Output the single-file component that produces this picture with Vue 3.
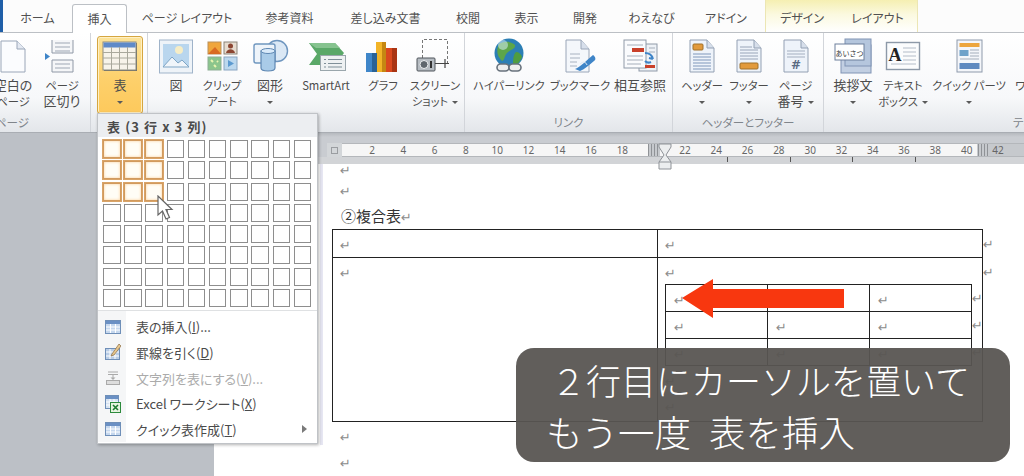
<script setup>
const tabs = [
  { t: 'ホーム', w: 69 },
  { t: '挿入', w: 55, active: true },
  { t: 'ページ レイアウト', w: 120 },
  { t: '参考資料', w: 85 },
  { t: '差し込み文書', w: 107 },
  { t: '校閲', w: 58 },
  { t: '表示', w: 59 },
  { t: '開発', w: 58 },
  { t: 'わえなび', w: 75 },
  { t: 'アドイン', w: 74 }
]
const ctxTabs = [
  { t: 'デザイン', w: 72 },
  { t: 'レイアウト', w: 79 }
]
const groups = [
  { label: 'ページ', w: 157, pad: 53, buttons: [
    { w: 52, icon: 'blank', l: ['空白の', 'ページ'] },
    { w: 46, icon: 'break', l: ['ページ', '区切り'] }
  ] },
  { label: '', w: 57, pad: 6, buttons: [
    { w: 46, icon: 'table', l: ['表'], caret: 'below', on: true }
  ] },
  { label: '', w: 317, pad: 0, buttons: [
    { w: 56, icon: 'picture', l: ['図'] },
    { w: 36, icon: 'clip', l: ['クリップ', 'アート'] },
    { w: 60, icon: 'shapes', l: ['図形'], caret: 'below' },
    { w: 52, icon: 'smart', l: ['SmartArt'] },
    { w: 62, icon: 'chart', l: ['グラフ'] },
    { w: 42, icon: 'shot', l: ['スクリーン', 'ショット'], caret: 'inline' }
  ] },
  { label: 'リンク', w: 208, pad: 0, buttons: [
    { w: 88, icon: 'globe', l: ['ハイパーリンク'] },
    { w: 54, icon: 'bookmark', l: ['ブックマーク'] },
    { w: 66, icon: 'xref', l: ['相互参照'] }
  ] },
  { label: 'ヘッダーとフッター', w: 151, pad: 0, buttons: [
    { w: 58, icon: 'header', l: ['ヘッダー'], caret: 'below' },
    { w: 36, icon: 'footer', l: ['フッター'], caret: 'below' },
    { w: 57, icon: 'pagenum', l: ['ページ', '番号'], caret: 'inline' }
  ] },
  { label: 'テキスト', w: 418, pad: 0, last: true, buttons: [
    { w: 58, icon: 'greet', l: ['挨拶文'], caret: 'below' },
    { w: 42, icon: 'textbox', l: ['テキスト', 'ボックス'], caret: 'inline' },
    { w: 90, icon: 'quick', l: ['クイック パーツ'], caret: 'below' },
    { w: 62, icon: 'none', l: ['ワードアート'] }
  ] }
]
const isKana = (s) => !/[\u4e00-\u9fff]/.test(s)
const rulerNums = []
for (let n = 2; n <= 42; n += 2) rulerNums.push(n)
const ticks = [1, 2, 3, 4]
const rows = [0, 1, 2, 3, 4, 5, 6, 7]
const cols = [0, 1, 2, 3, 4, 5, 6, 7, 8, 9]
</script>

<template>
  <div class="screen">
    <div class="tabbar">
      <div class="file"></div>
      <div
        v-for="tab in tabs"
        :key="tab.t"
        class="tab"
        :class="{ active: tab.active }"
        :style="{ width: tab.w + 'px' }"
      >{{ tab.t }}</div>
      <div class="ctx">
        <div v-for="tab in ctxTabs" :key="tab.t" class="tab" :style="{ width: tab.w + 'px' }">{{ tab.t }}</div>
      </div>
    </div>

    <div class="ribbon">
      <section
        v-for="(g, gi) in groups"
        :key="gi"
        class="group"
        :class="{ first: gi === 0, last: g.last }"
        :style="{ width: g.w + 'px', paddingLeft: g.pad + 'px' }"
      >
        <div class="btns">
          <div
            v-for="b in g.buttons"
            :key="b.icon"
            class="btn"
            :class="{ on: b.on }"
            :style="{ width: b.w + 'px' }"
          >
            <svg class="ico" width="44" height="38" viewBox="-2 0 44 38">
              <g v-if="b.icon === 'blank'">
                <path d="M8 3h16l8 8v23H8z" fill="#fbfcfe" stroke="#9aa6b8" />
                <path d="M24 3v8h8" fill="#e4e9f2" stroke="#9aa6b8" />
              </g>
              <g v-else-if="b.icon === 'break'">
                <path d="M10 2v13h21V2M10 34V22h21v12z" fill="#f5f6f8" stroke="#8f98a6" />
                <path d="M13 5h15M13 9h15M13 13h15M13 26h15M13 30h15" stroke="#9ea7b4" />
                <path d="M3 15l5 3.500-5 3.500z" fill="#3f85c8" />
              </g>
              <g v-else-if="b.icon === 'table'">
                <rect x="4" y="5" width="33" height="28" fill="#6b6a60" />
                <rect x="3" y="4" width="33" height="28" fill="#f7f3ea" stroke="#8d8c80" />
                <rect x="3.500" y="4.500" width="32" height="5" fill="#5f8ac8" />
                <path d="M3 14.500h33M3 20h33M3 26h33M11.500 9v23M19.500 9v23M27.500 9v23" stroke="#a9a89c" />
              </g>
              <g v-else-if="b.icon === 'picture'">
                <rect x="3.500" y="2" width="33" height="33" fill="#eef3f8" stroke="#9fb3c9" />
                <rect x="7" y="6" width="26" height="23" fill="#b9d6ee" />
                <circle cx="23" cy="12" r="4" fill="#f6edc6" />
                <path d="M7 29l9-10 6 6 4-3 7 7z" fill="#f0f5fa" stroke="#7ea5c5" />
              </g>
              <g v-else-if="b.icon === 'clip'">
                <rect x="6" y="4" width="13" height="12" fill="#f0a63c" stroke="#b9905a" />
                <path d="M6 16l7-7 6 7z" fill="#d96a22" />
                <rect x="22" y="4" width="13" height="12" fill="#e6dccf" stroke="#8b8378" />
                <circle cx="28.500" cy="8" r="2.500" fill="#8c4632" />
                <path d="M24 15c1-5 8-5 9 0z" fill="#8c4632" />
                <rect x="6" y="19" width="13" height="13" fill="#8bc58c" stroke="#8eae96" />
                <path d="M9 22l2 2M15 23l1 1M12 27l2 2" stroke="#e8f4b0" stroke-width="2" />
                <rect x="22" y="19" width="13" height="13" fill="#bcd8ee" stroke="#8aa6c2" />
                <path d="M26 22l6 3.500-6 3.500z" fill="#5c9ad0" />
              </g>
              <g v-else-if="b.icon === 'shapes'">
                <circle cx="27" cy="13" r="10.500" fill="#dbe8f5" stroke="#6f96bf" stroke-width="1.400" />
                <rect x="4" y="6" width="21" height="19" rx="2" fill="#eef4fa" stroke="#6f96bf" stroke-width="1.400" />
                <path d="M11 13v17c0 4 14 4 14 0V13z" fill="#a9cbe8" stroke="#5f88b3" stroke-width="1.200" />
                <ellipse cx="18" cy="13" rx="7" ry="2.500" fill="#d9eafa" stroke="#5f88b3" />
              </g>
              <g v-else-if="b.icon === 'smart'">
                <path d="M3 5h26l9 10-9 12H3l8-11z" fill="#5aa868" />
                <path d="M3 5h26l5 5H10z" fill="#86c38f" />
                <rect x="14.500" y="17.500" width="25" height="15" fill="#eef1f2" stroke="#9aa6ac" />
                <path d="M18 21.500h2M22 21.500h14M18 25.500h2M22 25.500h14M18 29h2M22 29h14" stroke="#7f8f98" />
              </g>
              <g v-else-if="b.icon === 'chart'">
                <rect x="3" y="15" width="10" height="19" fill="#3f86c9" />
                <rect x="13" y="4" width="10" height="30" fill="#f2b428" />
                <rect x="23" y="10" width="10" height="24" fill="#d9481e" />
                <rect x="9" y="15" width="5" height="19" fill="#2a6296" />
                <rect x="19" y="4" width="4" height="30" fill="#c58712" />
                <rect x="29" y="10" width="5" height="24" fill="#a93413" />
              </g>
              <g v-else-if="b.icon === 'shot'">
                <path d="M7.500 20V1.500h25v24" fill="none" stroke="#777" stroke-dasharray="3 2" />
                <rect x="2" y="20" width="18" height="13" rx="1" fill="#b6bcc2" stroke="#4f555b" />
                <circle cx="9" cy="26.500" r="4" fill="#5f666d" stroke="#eef0f2" />
                <rect x="15" y="23" width="2" height="7" fill="#333" />
                <path d="M20 25.500h10M30 21v9M26 25.500h8" stroke="#444" stroke-width="1.200" />
              </g>
              <g v-else-if="b.icon === 'globe'">
                <circle cx="20" cy="15" r="14.500" fill="#2c7fb5" />
                <path d="M10 6c6-3 12-3 16 1 1 4-5 5-8 8s-2 7-5 8c-3-3-7-8-3-17z" fill="#5da648" />
                <path d="M27 14c3 0 5 2 6 5-2 5-5 8-9 9 0-6 0-11 3-14z" fill="#4f9c40" />
                <circle cx="14" cy="7" r="5" fill="#d5ecf7" opacity=".55" />
                <rect x="8" y="26" width="12" height="7" rx="3.500" fill="#eee" stroke="#68727c" stroke-width="1.600" />
                <rect x="20" y="26" width="12" height="7" rx="3.500" fill="#eee" stroke="#68727c" stroke-width="1.600" />
              </g>
              <g v-else-if="b.icon === 'bookmark'">
                <path d="M6 2h15l8 9v23H6z" fill="#f4f7fb" stroke="#9aa6b8" />
                <path d="M21 2v9h8" fill="#d7dfeb" stroke="#9aa6b8" />
                <path d="M10 16h10M10 20h10M10 24h7M10 28h7" stroke="#a8b2c0" />
                <path d="M15 31c4-1 13-10 18-14 3 2 3 5 1 6-5 4-9 8-14 10z" fill="#3f85c8" />
                <path d="M20 26c3-3 6-2 7 1" stroke="#dbe8f5" fill="none" />
              </g>
              <g v-else-if="b.icon === 'xref'">
                <rect x="19" y="6" width="18" height="27" fill="#eef2f7" stroke="#8f9aa8" />
                <rect x="4" y="2" width="22" height="28" fill="#fafbfd" stroke="#8f9aa8" />
                <path d="M7 7h16M7 18h16M7 22h16M7 26h14M29 10h6M29 14h6" stroke="#a5aeba" />
                <rect x="12" y="10" width="12" height="4" fill="#c9402a" />
                <rect x="25" y="27" width="10" height="3" fill="#c9402a" />
                <path d="M25 15c4 0 7 2 8 6M33 21l-4-1M25 23c2 2 4 2 6 1" stroke="#3f85c8" stroke-width="2" fill="none" />
              </g>
              <g v-else-if="b.icon === 'header'">
                <path d="M8 2h17l7 8v24H8z" fill="#eef3fa" stroke="#93a0b3" />
                <path d="M25 2v8h7" fill="#d7dfeb" stroke="#93a0b3" />
                <rect x="11" y="6" width="10" height="6" rx="1" fill="#e29a3c" stroke="#a0712b" />
                <path d="M11 16h18M11 19h18M11 22h18M11 25h18M11 28h18M11 31h18" stroke="#7f97bb" />
              </g>
              <g v-else-if="b.icon === 'footer'">
                <path d="M8 2h17l7 8v24H8z" fill="#eef3fa" stroke="#93a0b3" />
                <path d="M25 2v8h7" fill="#d7dfeb" stroke="#93a0b3" />
                <path d="M11 9h12M11 12h18M11 15h18M11 18h18M11 21h18" stroke="#98a4b8" />
                <rect x="11" y="25" width="18" height="6" rx="1" fill="#e29a3c" stroke="#a0712b" />
              </g>
              <g v-else-if="b.icon === 'pagenum'">
                <path d="M8 2h17l7 8v24H8z" fill="#eef3fa" stroke="#93a0b3" />
                <path d="M25 2v8h7" fill="#d7dfeb" stroke="#93a0b3" />
                <path d="M11 13h18M11 16h18M11 19h18" stroke="#a3aebf" />
                <text x="20" y="31" class="hash">#</text>
              </g>
              <g v-else-if="b.icon === 'greet'">
                <rect x="8" y="7" width="30" height="28" fill="#c2cfe2" stroke="#8094b4" />
                <rect x="12" y="1" width="26" height="27" fill="#b5c6dd" stroke="#8094b4" />
                <rect x="2" y="6" width="29" height="16" fill="#fff" stroke="#6d7f9b" />
                <text x="16.500" y="18" class="greet">あいさつ</text>
              </g>
              <g v-else-if="b.icon === 'textbox'">
                <rect x="3.500" y="4.500" width="33" height="27" fill="#fbfcfd" stroke="#8d99a8" stroke-width="1.400" />
                <text x="12" y="23" class="big-a">A</text>
                <path d="M20 10h13M20 14h13M20 18h13M20 22h13M8 26h25" stroke="#b3bcc8" />
              </g>
              <g v-else-if="b.icon === 'quick'">
                <rect x="8" y="2" width="25" height="32" fill="#f4f6fa" stroke="#8e9aab" />
                <rect x="10.500" y="5" width="20" height="4" fill="#eda63e" />
                <rect x="10.500" y="12" width="9" height="6" fill="#6fa2c9" />
                <path d="M21 12h9M21 15h9M21 18h9M11 21h19" stroke="#a4aebb" />
                <rect x="10.500" y="25" width="20" height="6" fill="#5f8ac0" />
              </g>
            </svg>
            <div class="label">
              <div v-for="(line, i) in b.l" :key="i" class="line" :class="{ kana: isKana(line) }">{{ line }}<i v-if="b.caret === 'inline' && i === b.l.length - 1" class="caret inline"></i></div>
              <div v-if="b.caret === 'below'" class="line"><i class="caret"></i></div>
            </div>
          </div>
        </div>
        <div class="glabel">{{ g.label }}</div>
      </section>
    </div>

    <div class="work">
      <aside class="pane"></aside>
      <div class="main">
        <div class="band"></div>
        <div class="ruler-row">
          <div class="ruler-gap"></div>
          <div class="ruler-tab"><span></span></div>
          <div class="ruler">
            <span v-for="n in rulerNums" :key="n" class="num">{{ n === 20 ? '' : n }}</span>
            <span class="grid-mark"></span>
            <span class="grid-mark right"></span>
            <svg class="marker" width="18" height="27" viewBox="0 0 18 27">
              <path d="M3 1h12v3L10 12l5 7v7H3v-7l5-7-5-8z" fill="#eceeef" stroke="#8f9398" />
              <path d="M3 19h12" stroke="#8f9398" />
            </svg>
          </div>
        </div>
        <div class="strip"><i v-for="t in ticks" :key="t"></i></div>
        <div class="doc">
          <div class="page">
            <div class="para clip"><span class="rm">↵</span></div>
            <div class="para"><span class="rm">↵</span></div>
            <div class="para title">②複合表<span class="rm">↵</span></div>
            <table class="outer">
              <tbody>
                <tr class="r1">
                  <td><span class="rm">↵</span></td>
                  <td class="cell"><span class="rm">↵</span><span class="rm end">↵</span></td>
                </tr>
                <tr>
                  <td class="tall"><span class="rm">↵</span></td>
                  <td class="cell tall">
                    <div class="after first"><span class="rm">↵</span></div>
                    <span class="rm end">↵</span>
                    <table class="inner">
                      <tbody>
                        <tr v-for="r in 3" :key="r">
                          <td><span class="rm">↵</span></td>
                          <td><span class="rm">↵</span></td>
                          <td class="cell"><span class="rm">↵</span><span class="rm end">↵</span></td>
                        </tr>
                      </tbody>
                    </table>
                    <div class="after"><span class="rm">↵</span></div>
                    <div class="after"><span class="rm">↵</span></div>
                  </td>
                </tr>
              </tbody>
            </table>
            <div class="para"><span class="rm">↵</span></div>
            <div class="para"><span class="rm">↵</span></div>
          </div>
        </div>
      </div>
    </div>

    <div class="menu">
      <div class="mhead">表 (3 行 x 3 列)</div>
      <div class="grid">
        <template v-for="r in rows" :key="r">
          <div v-for="c in cols" :key="c" class="gc" :class="{ on: r < 3 && c < 3 }"></div>
        </template>
      </div>
      <div class="mlist">
        <div class="mi">
          <svg class="mico" width="16" height="16" viewBox="0 0 16 16"><rect x=".5" y="1.500" width="15" height="13" fill="#c6d8ee" stroke="#6f8fb8" /><rect x="1" y="2" width="14" height="3" fill="#6a90c4" /><path d="M1 8h14M1 11h14M5.500 5v9M10.500 5v9" stroke="#fff" /></svg>
          <span>表の挿入(<u>I</u>)...</span>
        </div>
        <div class="mi">
          <svg class="mico" width="16" height="18" viewBox="0 0 16 18"><rect x=".5" y="5.500" width="14" height="11" fill="#b9cde6" stroke="#6f8fb8" /><path d="M1 9h13M1 13h13M5 6v10M10 6v10" stroke="#fff" /><path d="M7 11L14 1l2 2-7 9-3 1z" fill="#e8c88e" stroke="#8a6a40" stroke-width=".7" /></svg>
          <span>罫線を引く(<u>D</u>)</span>
        </div>
        <div class="mi off">
          <svg class="mico" width="16" height="16" viewBox="0 0 16 16"><path d="M3 2h10M3 4.500h10M8 5v4" stroke="#aaa" /><path d="M5.500 7.500h5L8 10z" fill="#aaa" /><rect x="1.500" y="10.500" width="13" height="4" fill="#ddd" stroke="#aaa" /></svg>
          <span>文字列を表にする(<u>V</u>)...</span>
        </div>
        <div class="mi">
          <svg class="mico" width="16" height="18" viewBox="0 0 16 18"><rect x=".5" y=".5" width="13" height="13" fill="#d5e2f1" stroke="#6f8fb8" /><rect x="1" y="1" width="12" height="3" fill="#6a90c4" /><path d="M1 7h12M1 10h12M5 4v9M9 4v9" stroke="#fff" /><rect x="5.500" y="7.500" width="10" height="10" fill="#e6f3e0" stroke="#2c8a3c" /><path d="M8 10l5 5M13 10l-5 5" stroke="#1c7a2e" stroke-width="1.600" /></svg>
          <span>Excel ワークシート(<u>X</u>)</span>
        </div>
        <div class="mi">
          <svg class="mico" width="16" height="16" viewBox="0 0 16 16"><rect x=".5" y="1.500" width="15" height="13" fill="#c6d8ee" stroke="#6f8fb8" /><rect x="1" y="2" width="14" height="3" fill="#6a90c4" /><path d="M1 8h14M1 11h14M5.500 5v9M10.500 5v9" stroke="#fff" /></svg>
          <span>クイック表作成(<u>T</u>)</span>
          <i class="sub"></i>
        </div>
      </div>
    </div>

    <svg class="pointer" width="18" height="26" viewBox="0 0 18 26">
      <path d="M1 1v19l4.500-4 3.500 8 3.500-1.500-3.500-8h6z" fill="#fff" stroke="#666" stroke-width="1.200" />
    </svg>

    <svg class="arrow" width="164" height="40" viewBox="0 0 164 40">
      <path d="M0 19L31 0v10h131v19H31v10z" fill="#f8370f" />
    </svg>

    <div class="caption">
      <div class="cl one">２行目にカーソルを置いて</div>
      <div class="cl two">もう一度 表を挿入</div>
    </div>
  </div>
</template>

<style>
html, body { margin: 0; padding: 0; background: #fff; }
</style>

<style scoped>
.screen {
  position: relative;
  width: 1024px;
  height: 476px;
  overflow: hidden;
  display: flex;
  flex-direction: column;
  background: #fff;
  color: #4a4a4a;
  font-family: "Noto Sans CJK JP", "Noto Sans", sans-serif;
  font-feature-settings: "palt";
}

/* tab strip */
.tabbar {
  flex: none;
  display: flex;
  height: 32px;
  border-bottom: 1px solid #bcc0c5;
  box-sizing: content-box;
  background: #fcfcfc;
}
.file { width: 3px; background: #1f5fa8; }
.tab {
  flex: none;
  box-sizing: border-box;
  padding-top: 5px;
  text-align: center;
  font-size: 12px;
  line-height: 26px;
  white-space: nowrap;
  color: #505050;
}
.tab.active {
  height: 29px;
  padding-top: 1px;
  margin-top: 4px;
  background: #fff;
  border: 1px solid #bcc0c5;
  border-bottom: 0;
  border-radius: 3px 3px 0 0;
  position: relative;
  z-index: 1;
}
.ctx {
  display: flex;
  margin-left: 2px;
  background: linear-gradient(#f5efb2, #fbf9df 45%, #fff);
  border-left: 1px solid #ece6b4;
  border-right: 1px solid #ece6b4;
}

/* ribbon */
.ribbon {
  flex: none;
  display: flex;
  height: 100px;
  background: linear-gradient(#fff, #f7f8fa 65%, #e3e6ea);
  border-bottom: 1px solid #a9adb3;
  box-sizing: border-box;
}
.group {
  flex: none;
  box-sizing: border-box;
  display: flex;
  flex-direction: column;
  border-right: 1px solid #d2d5da;
  position: relative;
}
.group.first { margin-left: -66px; }
.group.last { border-right: 0; }
.btns { display: flex; height: 80px; }
.btn {
  flex: none;
  box-sizing: border-box;
  height: 78px;
  margin-top: 3px;
  display: flex;
  flex-direction: column;
  align-items: center;
}
.btn.on {
  background: linear-gradient(#fce39a, #fdd06b 55%, #fdc95c);
  border: 1px solid #d5a640;
  border-radius: 3px;
  box-shadow: inset 0 0 0 1px #fff0c4;
}
.ico { flex: none; margin-top: 2px; overflow: visible; }
.btn.on .ico { margin-top: 1px; }
.hash { font: bold 12px "DejaVu Sans", sans-serif; fill: #5a6a82; text-anchor: middle; }
.greet { font: 7px "Noto Sans CJK JP", sans-serif; fill: #333; text-anchor: middle; }
.big-a { font: bold 18px "Liberation Serif", serif; fill: #222; text-anchor: middle; }
.label {
  margin-top: 1px;
  font-size: 13px;
  line-height: 16px;
  text-align: center;
  white-space: nowrap;
  color: #4c4c4c;
}
.line { height: 16px; }
.line.kana { font-size: 11.300px; }
.caret {
  display: inline-block;
  width: 0;
  height: 0;
  border: 3px solid transparent;
  border-top: 3px solid #5a5a5a;
  border-bottom: 0;
  vertical-align: middle;
}
.caret.inline { margin-left: 4px; }
.glabel {
  position: absolute;
  left: 0;
  right: 0;
  bottom: 2px;
  text-align: center;
  font-size: 11.500px;
  line-height: 16px;
  color: #80858b;
  white-space: nowrap;
}

/* work area */
.work { flex: 1; min-height: 0; display: flex; }
.pane { flex: none; width: 214px; background: #bcc0c6; }
.main { flex: 1; min-width: 0; display: flex; flex-direction: column; }
.band { flex: none; height: 10px; background: linear-gradient(#b6babf, #c9ccd1 40%); }
.ruler-row {
  flex: none;
  display: flex;
  height: 14px;
  background: #c9ccd1;
}
.ruler-gap { flex: none; width: 113px; }
.ruler-tab {
  flex: none;
  width: 15px;
  display: flex;
  align-items: center;
  justify-content: center;
  background: #d3d6d9;
}
.ruler-tab span { width: 7px; height: 7px; border: 1px solid #9a9da1; box-sizing: border-box; }
.ruler {
  flex: 1;
  position: relative;
  display: flex;
  padding-left: 14.350px;
  background: linear-gradient(to right, #f6f6f6 635px, #c6c9cd 635px);
  border-top: 1px solid #b4b7bb;
  border-bottom: 1px solid #b4b7bb;
  box-sizing: border-box;
}
.num {
  flex: none;
  width: 31.300px;
  text-align: center;
  font: 10px/12px "Noto Sans", sans-serif;
  color: #666;
}
.marker { position: absolute; left: 314px; top: -1px; }
.grid-mark {
  position: absolute;
  left: 306px;
  top: 0;
  width: 12px;
  height: 12px;
  background:
    repeating-linear-gradient(to right, #8f9296 0 1px, transparent 1px 3px),
    #c6c9cd;
}
.grid-mark.right { left: 636px; background: repeating-linear-gradient(to right, #8f9296 0 1px, transparent 1px 3px); }
.strip {
  flex: none;
  display: flex;
  gap: 61.500px;
  height: 7px;
  padding-left: 513px;
  background: #d2d4d7;
}
.strip i { width: 1px; height: 5px; background: #555; }
.doc { flex: 1; min-height: 0; background: #fff; }
.page {
  height: 100%;
  margin-left: 106px;
  padding-left: 12px;
  background: linear-gradient(#e6e6f2, #e6e6f2) no-repeat left top / 3px 281px;
}
.para { height: 26px; line-height: 26px; }
.para.clip { height: 12px; line-height: 0; overflow: hidden; }
.para.title {
  height: 27px;
  line-height: 27px;
  margin-left: 9px;
  font-size: 15px;
  color: #333;
}
.page > .para:not(.title) { padding-left: 8px; }
.rm {
  font: 13px/1 "DejaVu Sans", sans-serif;
  color: #8c8c8c;
}
.outer, .inner { border-collapse: collapse; table-layout: fixed; }
.outer { width: 650px; }
.outer > tbody > tr > td {
  width: 325px;
  padding: 0 0 0 7px;
  border: 1px solid #222;
  line-height: 27px;
  vertical-align: top;
  box-sizing: border-box;
}
.r1 { height: 28px; }
.tall { height: 164px; }
.cell { position: relative; }
.end { position: absolute; left: 100%; margin-left: 1px; }
.cell.tall > .end { top: 8px; }
.r1 .end { top: 8px; }
.inner { width: 306px; margin: 0; }
.inner td {
  width: 102px;
  height: 27px;
  padding: 0 0 0 8px;
  border: 1px solid #222;
  line-height: 26px;
  box-sizing: border-box;
}
.inner .end { top: 7px; }
.after { height: 26px; line-height: 26px; }
.after.first { height: 26px; }

/* insert table menu */
.menu {
  position: absolute;
  left: 97px;
  top: 113px;
  width: 221px;
  height: 331px;
  box-sizing: border-box;
  background: #fff;
  border: 1px solid #c0c3c7;
  box-shadow: 1px 1px 3px rgba(0, 0, 0, .3);
}
.mhead {
  height: 23px;
  padding-left: 9px;
  background: #eceef1;
  font-size: 13px;
  font-weight: 700;
  line-height: 25px;
  color: #4a4a4a;
  letter-spacing: 1.100px;
}
.grid {
  display: grid;
  grid-template-columns: repeat(10, 17.500px);
  grid-auto-rows: 18px;
  gap: 3.300px 3.700px;
  padding: 3px 0 3px 5px;
  border-bottom: 1px solid #dfe1e3;
}
.gc {
  box-sizing: border-box;
  border: 1.300px solid #8e8e8e;
}
.gc.on {
  border-color: #d19a5e;
  box-shadow: 0 0 0 1px #d9a468, inset 0 0 3px #fbd09a;
  background: #fffdf6;
}
.mlist {
  position: relative;
  padding-top: 3px;
  background: linear-gradient(#f5f6f7, #f5f6f7) no-repeat left top / 28px 100%;
}
.mi {
  display: flex;
  align-items: center;
  height: 25.600px;
  padding-left: 7px;
  font-size: 13px;
  color: #4a4a4a;
  white-space: nowrap;
}
.mico { flex: none; margin-right: 15px; }
.mi.off { color: #ababab; }
.sub {
  margin-left: auto;
  margin-right: 10px;
  width: 0;
  height: 0;
  border: 4px solid transparent;
  border-left: 5px solid #7a7a7a;
  border-right: 0;
}

/* overlays */
.pointer { position: absolute; left: 157px; top: 195px; }
.arrow { position: absolute; left: 682px; top: 279px; }
.caption {
  position: absolute;
  left: 516px;
  top: 348px;
  width: 494px;
  height: 114px;
  box-sizing: border-box;
  padding-top: 6px;
  background: rgba(88, 85, 82, .95);
  border-radius: 18px;
  color: #fff;
  font-size: 35px;
  font-weight: 300;
  line-height: 52px;
  font-feature-settings: normal;
  white-space: nowrap;
}
.cl.one { padding-left: 35px; }
.cl.two { padding-left: 30px; font-size: 36.500px; word-spacing: 10px; }
</style>
